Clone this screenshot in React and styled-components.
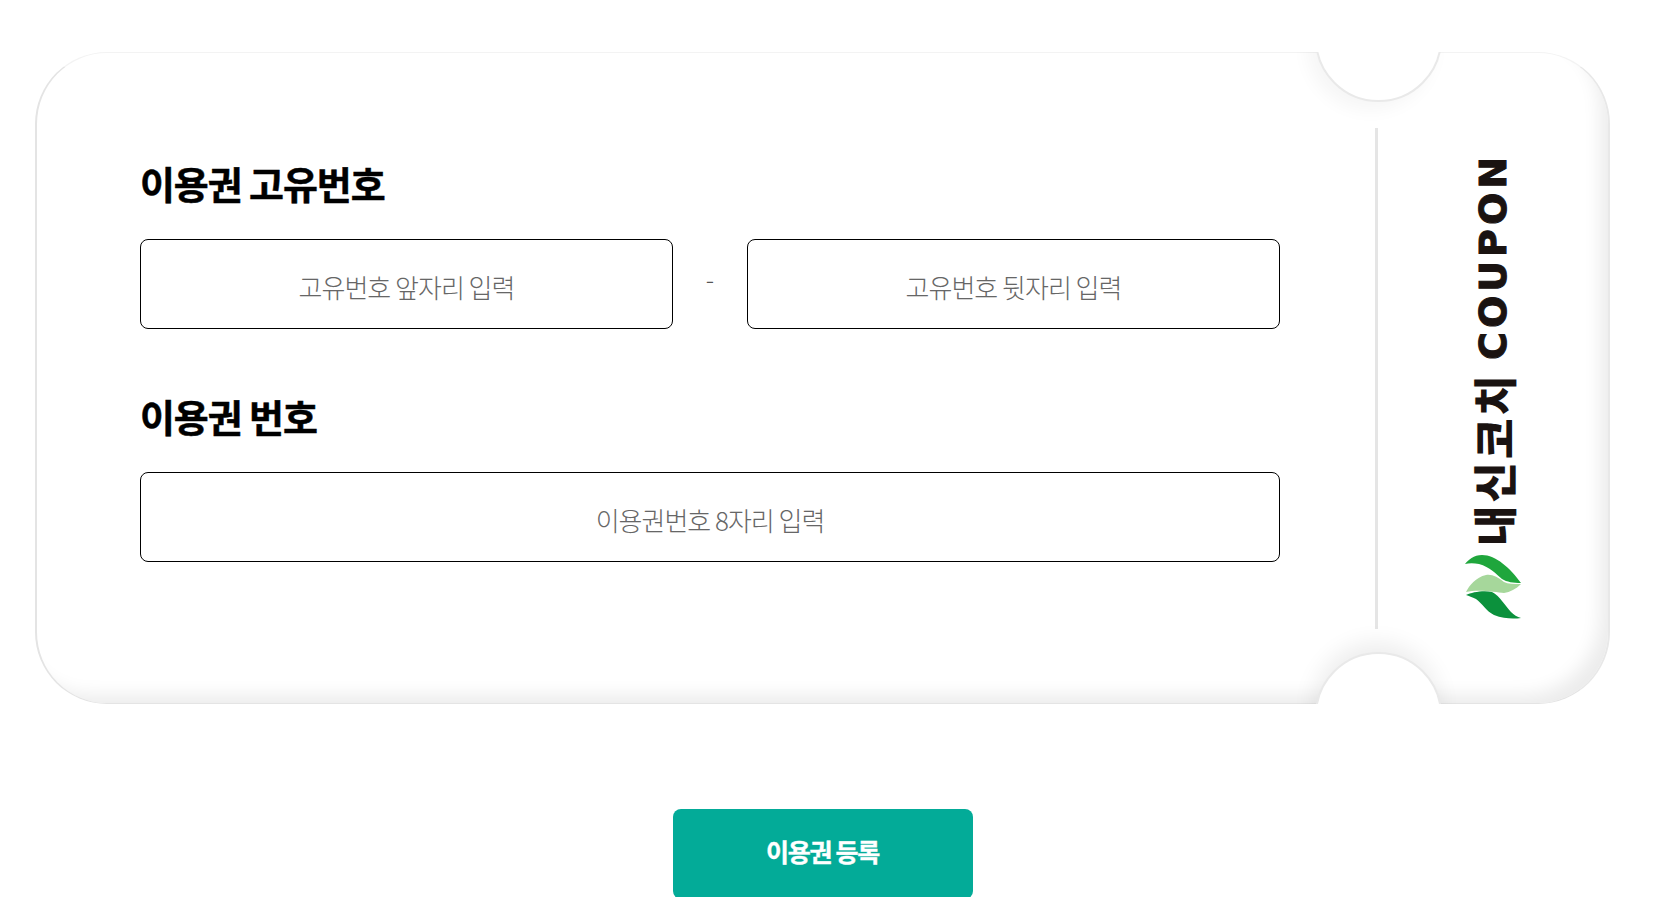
import styled, { createGlobalStyle } from "styled-components";

const FONT = `"Noto Sans CJK KR", "Noto Sans", sans-serif`;

const GlobalStyle = createGlobalStyle`
  html, body {
    margin: 0;
    height: 100%;
    overflow: hidden;
    background: #fff;
    font-family: ${FONT};
  }
`;

const Page = styled.div`
  width: 1575px;
  height: 897px;
  margin-left: 35px;
  padding-top: 52px;
  box-sizing: border-box;
  overflow: hidden;
`;

const Ticket = styled.div`
  position: relative;
  display: flex;
  height: 652px;
  box-sizing: border-box;
  border: 2px solid #e4e4e4;
  border-top: 1px solid #f3f3f3;
  border-right-color: #e8e8e8;
  border-bottom-width: 1px;
  border-radius: 72px;
  box-shadow: inset -16px -16px 18px -8px rgba(0, 0, 0, 0.08);
`;

const Notch = styled.div`
  position: absolute;
  left: 1278px;
  width: 127px;
  height: 127px;
  box-sizing: border-box;
  border: 2px solid #e9e9e9;
  border-radius: 50%;
  background: #fff;
  ${(p) =>
    p.$side === "top"
      ? `
    top: -78px;
    box-shadow: -8px 8px 18px rgba(0, 0, 0, 0.04);
    clip-path: inset(77px -50px -50px -50px);
  `
      : `
    bottom: -76px;
    box-shadow: -2px -10px 22px rgba(0, 0, 0, 0.07);
    clip-path: inset(-50px -50px 75px -50px);
  `}
`;

const Form = styled.div`
  width: 1338px;
  padding: 100px 0 0 103px;
  box-sizing: border-box;
`;

const Title = styled.h2`
  margin: 0 0 26px;
  height: 60px;
  font-size: 38px;
  line-height: 60px;
  font-weight: 700;
  letter-spacing: -1.1px;
  color: #000;
  -webkit-text-stroke: 0.5px #000;
`;

const Row = styled.div`
  display: flex;
  align-items: center;
  width: 1140px;
  margin-bottom: ${(p) => p.$gap || 0}px;
`;

const Field = styled.input`
  flex: 1;
  min-width: 0;
  height: 90px;
  box-sizing: border-box;
  padding: 5px 10px 0;
  border: 1px solid #000;
  border-radius: 8px;
  background: #fff;
  font-family: ${FONT};
  font-size: 26px;
  font-weight: 300;
  letter-spacing: -1px;
  text-align: center;
  outline: none;

  &::placeholder {
    color: #666;
    opacity: 1;
  }
`;

const Dash = styled.span`
  width: 74px;
  text-align: center;
  font-size: 25px;
  font-weight: 300;
  color: #555;
  position: relative;
  top: -6px;
`;

const Stub = styled.div`
  display: flex;
  flex-direction: column;
  align-items: center;
  align-self: center;
  flex: 1;
  height: 501px;
  padding: 25px 0 0;
  box-sizing: border-box;
  border-left: 3px solid #e5e5e5;
`;

const Brand = styled.div`
  display: flex;
  align-items: center;
  flex-shrink: 0;
  writing-mode: vertical-rl;
  text-orientation: sideways;
  transform: rotate(180deg);
  white-space: nowrap;
  color: #1a1311;
`;

const BrandKo = styled.span`
  margin-top: 9px;
  font-family: ${FONT};
  font-size: 44px;
  font-weight: 900;
  letter-spacing: 3px;
  line-height: 1;
`;

const BrandEn = styled.span`
  margin-top: 12px;
  font-family: "DejaVu Sans", sans-serif;
  font-size: 38px;
  font-weight: 700;
  letter-spacing: 4px;
  line-height: 1;
  -webkit-text-stroke: 1px #1a1311;
`;

const Leaf = styled.svg`
  width: 58px;
  height: 66px;
  flex-shrink: 0;
`;

const ButtonRow = styled.div`
  display: flex;
  justify-content: center;
  margin-top: 105px;
`;

const Submit = styled.button`
  width: 300px;
  height: 90px;
  padding: 0 0 6px;
  border: 0;
  border-radius: 8px;
  background: #03ab98;
  color: #fff;
  font-family: ${FONT};
  font-size: 25px;
  font-weight: 700;
  letter-spacing: -1.3px;
  -webkit-text-stroke: 0.4px #fff;
`;

function LeafMark() {
  return (
    <Leaf viewBox="0 0 58 66">
      <path
        d="M1 10 C4 6 10 1 18 1 C32 1 46 14 57 29 C49 29 43 28 38 25 C32 20 26 13 15 10 C10 9 5 9 1 10 Z"
        fill="#1fa63c"
      />
      <path
        d="M2 38 C5 32 12 23 22 21 C28 20 34 23 40 28 C44 30 50 30 57 30 C52 35 46 38 40 39 C32 38 14 35 2 38 Z"
        fill="#a6d79b"
      />
      <path
        d="M2 41 C8 38 20 36 28 38 C36 42 42 53 47 58 C50 61 53 63 57 64 C50 65 40 65 30 61 C22 57 18 49 12 45 C8 43 5 42 2 41 Z"
        fill="#0b913c"
      />
    </Leaf>
  );
}

export default function App() {
  return (
    <Page>
      <GlobalStyle />
      <Ticket>
        <Notch $side="top" />
        <Notch $side="bottom" />
        <Form>
          <Title>이용권 고유번호</Title>
          <Row $gap={57}>
            <Field placeholder="고유번호 앞자리 입력" />
            <Dash>-</Dash>
            <Field placeholder="고유번호 뒷자리 입력" />
          </Row>
          <Title>이용권 번호</Title>
          <Row>
            <Field placeholder="이용권번호 8자리 입력" />
          </Row>
        </Form>
        <Stub>
          <Brand>
            <BrandKo>내신코치</BrandKo>
            <BrandEn>COUPON</BrandEn>
          </Brand>
          <LeafMark />
        </Stub>
      </Ticket>
      <ButtonRow>
        <Submit>이용권 등록</Submit>
      </ButtonRow>
    </Page>
  );
}
